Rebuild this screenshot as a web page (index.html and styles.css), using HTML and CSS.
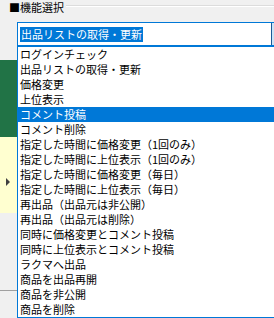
FILE: index.html
```html
<!DOCTYPE html>
<html lang="ja">
<head>
    <meta charset="UTF-8">
    <meta name="viewport" content="width=device-width, initial-scale=1.0">
    <title>機能選択</title>
    <link rel="stylesheet" href="styles.css">
</head>
<body>
    <div class="page">
        <div class="legend">
            <span class="legend-text">■機能選択</span>
            <span class="legend-line"></span>
        </div>
        <div class="combo">
            <span class="combo-value">出品リストの取得・更新</span>
            <span class="combo-button">
                <svg width="9" height="5" viewBox="0 0 9 5"><path d="M0.5 0.5 L4.5 4.5 L8.5 0.5" fill="none" stroke="#3c3c3c" stroke-width="1"/></svg>
            </span>
        </div>
        <div class="side">
            <div class="side-green"></div>
            <div class="side-yellow">
                <span class="arrow"></span>
            </div>
            <div class="side-gray"></div>
        </div>

        <ul class="dropdown">
            <li>ログインチェック</li>
            <li>出品リストの取得・更新</li>
            <li>価格変更</li>
            <li>上位表示</li>
            <li class="selected">コメント投稿</li>
            <li>コメント削除</li>
            <li>指定した時間に価格変更（1回のみ）</li>
            <li>指定した時間に上位表示（1回のみ）</li>
            <li>指定した時間に価格変更（毎日）</li>
            <li>指定した時間に上位表示（毎日）</li>
            <li>再出品（出品元は非公開）</li>
            <li>再出品（出品元は削除）</li>
            <li>同時に価格変更とコメント投稿</li>
            <li>同時に上位表示とコメント投稿</li>
            <li>ラクマへ出品</li>
            <li>商品を出品再開</li>
            <li>商品を非公開</li>
            <li>商品を削除</li>
        </ul>
    </div>
</body>
</html>
```

FILE: styles.css
```css
body {
    margin: 0;
    padding: 0;
    background: #f0f0f0;
    font-family: "Noto Sans CJK JP", "Noto Sans", sans-serif;
    font-size: 11px;
    color: #000;
}

.page {
    position: relative;
    width: 274px;
    height: 318px;
    overflow: hidden;
}

.legend {
    display: flex;
    height: 14px;
    padding-top: 1px;
    line-height: 13px;
}

.legend-text {
    padding-left: 9px;
    padding-right: 2px;
}

.legend-line {
    flex: 1;
    margin-top: 4px;
    height: 0;
    border-top: 1px solid #dcdcdc;
    border-bottom: 1px solid #fff;
}

.combo {
    display: flex;
    align-items: center;
    margin: 7px 0 0 17px;
    width: 270px;
    height: 22px;
    border: 1px solid #0078d7;
    background: #fff;
}

.combo-value {
    margin-left: 2px;
    padding: 0 1px;
    height: 15px;
    line-height: 15px;
    background: #0078d7;
    color: #fff;
}

.combo-button {
    display: flex;
    align-items: center;
    justify-content: center;
    margin-left: auto;
    width: 16px;
    height: 22px;
    border-left: 1px solid #1c5a96;
    background: #cce4f7;
}

.side {
    display: flex;
    flex-direction: column;
    width: 17px;
    margin-top: 14px;
}

.side-green {
    height: 77px;
    background: #217346;
}

.side-yellow {
    display: flex;
    align-items: center;
    height: 76px;
    background: #ffffd0;
}

.arrow {
    margin-left: 6px;
    margin-top: 14px;
    width: 0;
    height: 0;
    border-top: 4px solid transparent;
    border-bottom: 4px solid transparent;
    border-left: 4px solid #404040;
}

.side-gray {
    height: 77px;
    border-bottom: 1px solid #a0a0a0;
}

.dropdown {
    position: absolute;
    left: 17px;
    top: 46px;
    width: 280px;
    margin: 0;
    padding: 0;
    list-style: none;
    background: #fff;
    border: 1px solid #0078d7;
    border-right: none;
}

.dropdown li {
    height: 15px;
    line-height: 15px;
    padding-left: 2px;
    white-space: nowrap;
}

.dropdown li.selected {
    background: #0078d7;
    color: #fff;
}
```
